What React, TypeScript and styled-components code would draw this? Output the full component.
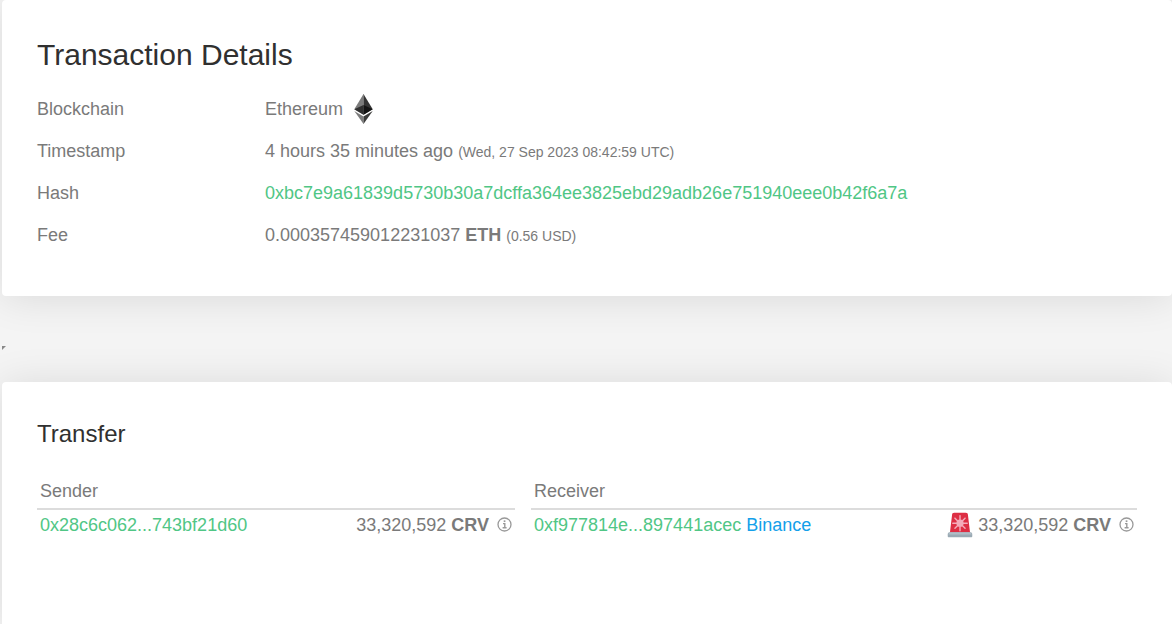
import React from "react";
import styled, { createGlobalStyle } from "styled-components";

const GlobalStyle = createGlobalStyle`
  *, *::before, *::after { box-sizing: border-box; }
  html { background: #f4f4f4; }
  body {
    margin: 0;
    color: #7a7a7a;
    font-family: "Liberation Sans", Arial, sans-serif;
    font-size: 18px;
    line-height: 24px;
  }
`;

const Page = styled.main`
  display: flex;
  flex-direction: column;
  min-height: 100vh;
  padding-left: 2px;
`;

const Card = styled.section<{ $grow?: boolean }>`
  flex: ${(p) => (p.$grow ? "1 0 auto" : "none")};
  padding: 35px 35px 40px;
  background: #fff;
  border-radius: ${(p) => (p.$grow ? "4px 4px 0 0" : "4px")};
  box-shadow: 0 2px 40px rgba(0, 0, 0, 0.11);
`;

const Divider = styled.div`
  display: flex;
  align-items: center;
  height: 86px;
  padding-top: 18px;
`;

const Title = styled.h1`
  margin: 0 0 13px;
  color: #303030;
  font-size: 30px;
  font-weight: 400;
  line-height: 40px;
`;

const Subtitle = styled.h2`
  margin: 0 0 25px;
  color: #303030;
  font-size: 24px;
  font-weight: 400;
  line-height: 34px;
`;

const DetailTable = styled.table`
  width: 100%;
  border-collapse: collapse;
  table-layout: fixed;
`;

const DetailLabel = styled.th`
  width: 228px;
  height: 42px;
  padding: 0;
  font-weight: 400;
  text-align: left;
`;

const DetailValue = styled.td`
  padding: 0;
`;

const WithIcon = styled.span`
  display: flex;
  align-items: center;
  gap: 11px;
`;

const Small = styled.small`
  font-size: 14px;
`;

const Link = styled.a<{ $owner?: boolean }>`
  color: ${(p) => (p.$owner ? "#14a0ea" : "#50c685")};
  text-decoration: none;
`;

const Parties = styled.div`
  display: grid;
  grid-template-columns: 478fr 606fr;
  gap: 16px;
`;

const PartyTable = styled.table`
  width: 100%;
  border-collapse: collapse;
`;

const PartyHead = styled.th`
  padding: 3px 3px 5px;
  border-bottom: 2px solid #dcdcdc;
  font-weight: 400;
  text-align: left;
`;

const PartyCell = styled.td`
  height: 30px;
  padding: 1px 3px;
`;

const Amount = styled.span`
  display: flex;
  align-items: center;
  justify-content: flex-end;
  gap: 5px;
`;

const InfoButton = styled.button`
  display: flex;
  margin-left: 3px;
  padding: 0;
  border: 0;
  background: none;
  color: #999;
`;

const EthereumIcon = () => (
  <svg width="19" height="30" viewBox="0 0 784 1277" aria-hidden="true">
    <path fill="#343434" d="M392 0l-9 29v845l9 8 392-231z" />
    <path fill="#7c7c7c" d="M392 0L0 651l392 231V472z" />
    <path fill="#3c3c3b" d="M392 957l-5 5v301l5 14 392-552z" />
    <path fill="#7c7c7c" d="M392 1277V957L0 725z" />
    <path fill="#141414" d="M392 882l392-231-392-179z" />
    <path fill="#303030" d="M0 651l392 231V472z" />
  </svg>
);

const SirenIcon = () => (
  <svg width="26" height="26" viewBox="0 0 36 36" role="img" aria-label="Alert">
    <path fill="#dd2e44" d="M32 29c0 1-1 2-2 2H6c-1 0-2-1-2-2L7 4c0-2 1-3 3-3h16c2 0 3 1 3 3z" />
    <g stroke="#f4abba" strokeWidth="2" strokeLinecap="round">
      <path d="M18 5v21M8 15.500h20M11 8.500l14 14M25 8.500l-14 14" />
    </g>
    <circle cx="18" cy="15.500" r="5" fill="#f4abba" />
    <path fill="#9aaab4" d="M34 35H2c-1 0-1-1-1-2v-2c0-2 1-3 3-3h28c2 0 3 1 3 3v2c0 1 0 2-1 2z" />
    <path fill="#b0bec7" d="M2 31c0-2 1-3 3-3h26c2 0 3 1 3 3z" />
  </svg>
);

const InfoIcon = () => (
  <svg width="15" height="15" viewBox="0 0 15 15" fill="none" stroke="currentColor" aria-hidden="true">
    <circle cx="7.5" cy="7.5" r="6.5" strokeWidth="1.3" />
    <path d="M6 6.6h1.8v4M5.6 10.800h4" strokeWidth="1.4" />
    <path d="M6.700 4.200h1.700" strokeWidth="1.700" />
  </svg>
);

const CornerMark = () => (
  <svg width="4" height="4" viewBox="0 0 4 4" aria-hidden="true">
    <path fill="#888" d="M0 0h4L0 4z" />
  </svg>
);

type PartyProps = {
  role: string;
  address: string;
  owner?: string;
  alert?: boolean;
};

const Party = ({ role, address, owner, alert }: PartyProps) => (
  <PartyTable>
    <thead>
      <tr>
        <PartyHead colSpan={2}>{role}</PartyHead>
      </tr>
    </thead>
    <tbody>
      <tr>
        <PartyCell>
          <Link href="#address">{address}</Link>
          {owner && (
            <>
              {" "}
              <Link href="#owner" $owner>
                {owner}
              </Link>
            </>
          )}
        </PartyCell>
        <PartyCell>
          <Amount>
            {alert && <SirenIcon />}
            <span>
              33,320,592 <b>CRV</b>
            </span>
            <InfoButton type="button" aria-label="Amount information">
              <InfoIcon />
            </InfoButton>
          </Amount>
        </PartyCell>
      </tr>
    </tbody>
  </PartyTable>
);

export default function App() {
  return (
    <>
      <GlobalStyle />
      <Page>
        <Card>
          <Title>Transaction Details</Title>
          <DetailTable>
            <tbody>
              <tr>
                <DetailLabel scope="row">Blockchain</DetailLabel>
                <DetailValue>
                  <WithIcon>
                    Ethereum <EthereumIcon />
                  </WithIcon>
                </DetailValue>
              </tr>
              <tr>
                <DetailLabel scope="row">Timestamp</DetailLabel>
                <DetailValue>
                  4 hours 35 minutes ago <Small>(Wed, 27 Sep 2023 08:42:59 UTC)</Small>
                </DetailValue>
              </tr>
              <tr>
                <DetailLabel scope="row">Hash</DetailLabel>
                <DetailValue>
                  <Link href="#transaction">
                    0xbc7e9a61839d5730b30a7dcffa364ee3825ebd29adb26e751940eee0b42f6a7a
                  </Link>
                </DetailValue>
              </tr>
              <tr>
                <DetailLabel scope="row">Fee</DetailLabel>
                <DetailValue>
                  0.000357459012231037 <b>ETH</b> <Small>(0.56 USD)</Small>
                </DetailValue>
              </tr>
            </tbody>
          </DetailTable>
        </Card>
        <Divider>
          <CornerMark />
        </Divider>
        <Card $grow>
          <Subtitle>Transfer</Subtitle>
          <Parties>
            <Party role="Sender" address="0x28c6c062...743bf21d60" />
            <Party role="Receiver" address="0xf977814e...897441acec" owner="Binance" alert />
          </Parties>
        </Card>
      </Page>
    </>
  );
}
